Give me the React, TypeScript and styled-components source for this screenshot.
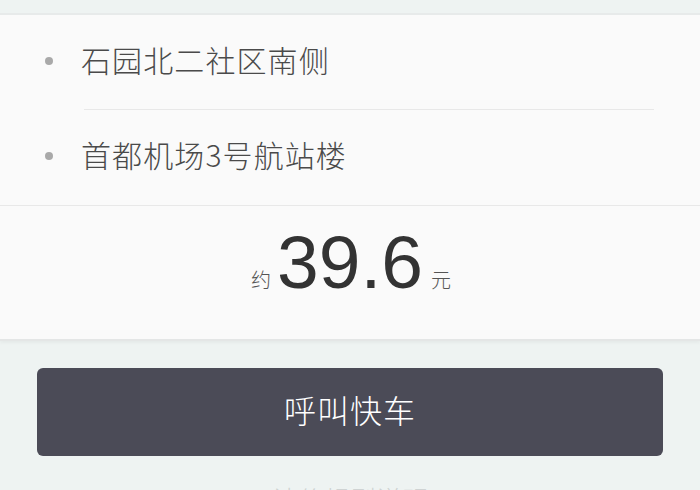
import React from "react";
import styled, { createGlobalStyle } from "styled-components";

const GlobalStyle = createGlobalStyle`
  html, body {
    margin: 0;
    padding: 0;
    background: #eef3f2;
    font-family: "Liberation Sans", Roboto, "Noto Sans CJK SC", sans-serif;
    overflow: hidden;
  }
`;

const Page = styled.div`
  width: 700px;
  height: 490px;
  padding-top: 13px;
  box-sizing: border-box;
  overflow: hidden;
`;

const Card = styled.div`
  background: #fafafa;
  border-top: 2px solid #e7eaea;
  border-bottom: 2px solid #e4e6e6;
  box-shadow: 0 2px 3px rgba(0, 0, 0, 0.04);
`;

const AddressRow = styled.div<{ $inset?: boolean }>`
  height: ${(p) => (p.$inset ? "95px" : "96px")};
  box-sizing: border-box;
  display: flex;
  align-items: center;
  padding: 0 0 7px 45px;
  position: relative;
  border-bottom: ${(p) => (p.$inset ? "none" : "1px solid #e8e8e8")};

  &::after {
    content: "";
    display: ${(p) => (p.$inset ? "block" : "none")};
    position: absolute;
    left: 84px;
    right: 46px;
    bottom: 0;
    height: 1px;
    background: #e8e8e8;
  }
`;

const Dot = styled.span`
  width: 8px;
  height: 8px;
  border-radius: 50%;
  background: #a9a9a9;
  margin: 4px 28px 0 0;
`;

const Address = styled.span`
  font-family: "Noto Sans CJK SC", sans-serif;
  font-size: 30px;
  font-weight: 300;
  color: #4a4a4a;
  letter-spacing: 1.1px;
`;

const Price = styled.div`
  height: 133px;
  display: flex;
  align-items: baseline;
  justify-content: center;
  padding-top: 1px;
  box-sizing: border-box;
  margin-left: 2px;
`;

const Unit = styled.span`
  font-family: "Noto Sans CJK SC", sans-serif;
  font-size: 20px;
  font-weight: 300;
  color: #555;
`;

const Amount = styled.span`
  font-family: "Liberation Sans", sans-serif;
  font-size: 75px;
  line-height: 110px;
  color: #333;
  margin: 0 8px 0 6px;
`;

const Button = styled.button`
  display: flex;
  align-items: center;
  justify-content: center;
  margin: 27px 37px 0 37px;
  width: 626px;
  height: 88px;
  background: #4b4b57;
  border: none;
  border-radius: 6px;
  color: #fff;
  font-family: "Noto Sans CJK SC", sans-serif;
  font-size: 32px;
  font-weight: 300;
  letter-spacing: 1px;
  padding: 0 0 6px 0;
  cursor: pointer;
`;

const Note = styled.div`
  margin-top: 24px;
  text-align: center;
  font-family: "Noto Sans CJK SC", sans-serif;
  font-size: 26px;
  font-weight: 300;
  color: #cfd3d3;
`;

const App: React.FC = () => {
  return (
    <Page>
      <GlobalStyle />
      <Card>
        <AddressRow $inset>
          <Dot />
          <Address>石园北二社区南侧</Address>
        </AddressRow>
        <AddressRow>
          <Dot />
          <Address>首都机场3号航站楼</Address>
        </AddressRow>
        <Price>
          <Unit>约</Unit>
          <Amount>39.6</Amount>
          <Unit>元</Unit>
        </Price>
      </Card>
      <Button>呼叫快车</Button>
      <Note>计价规则说明</Note>
    </Page>
  );
};

export default App;
